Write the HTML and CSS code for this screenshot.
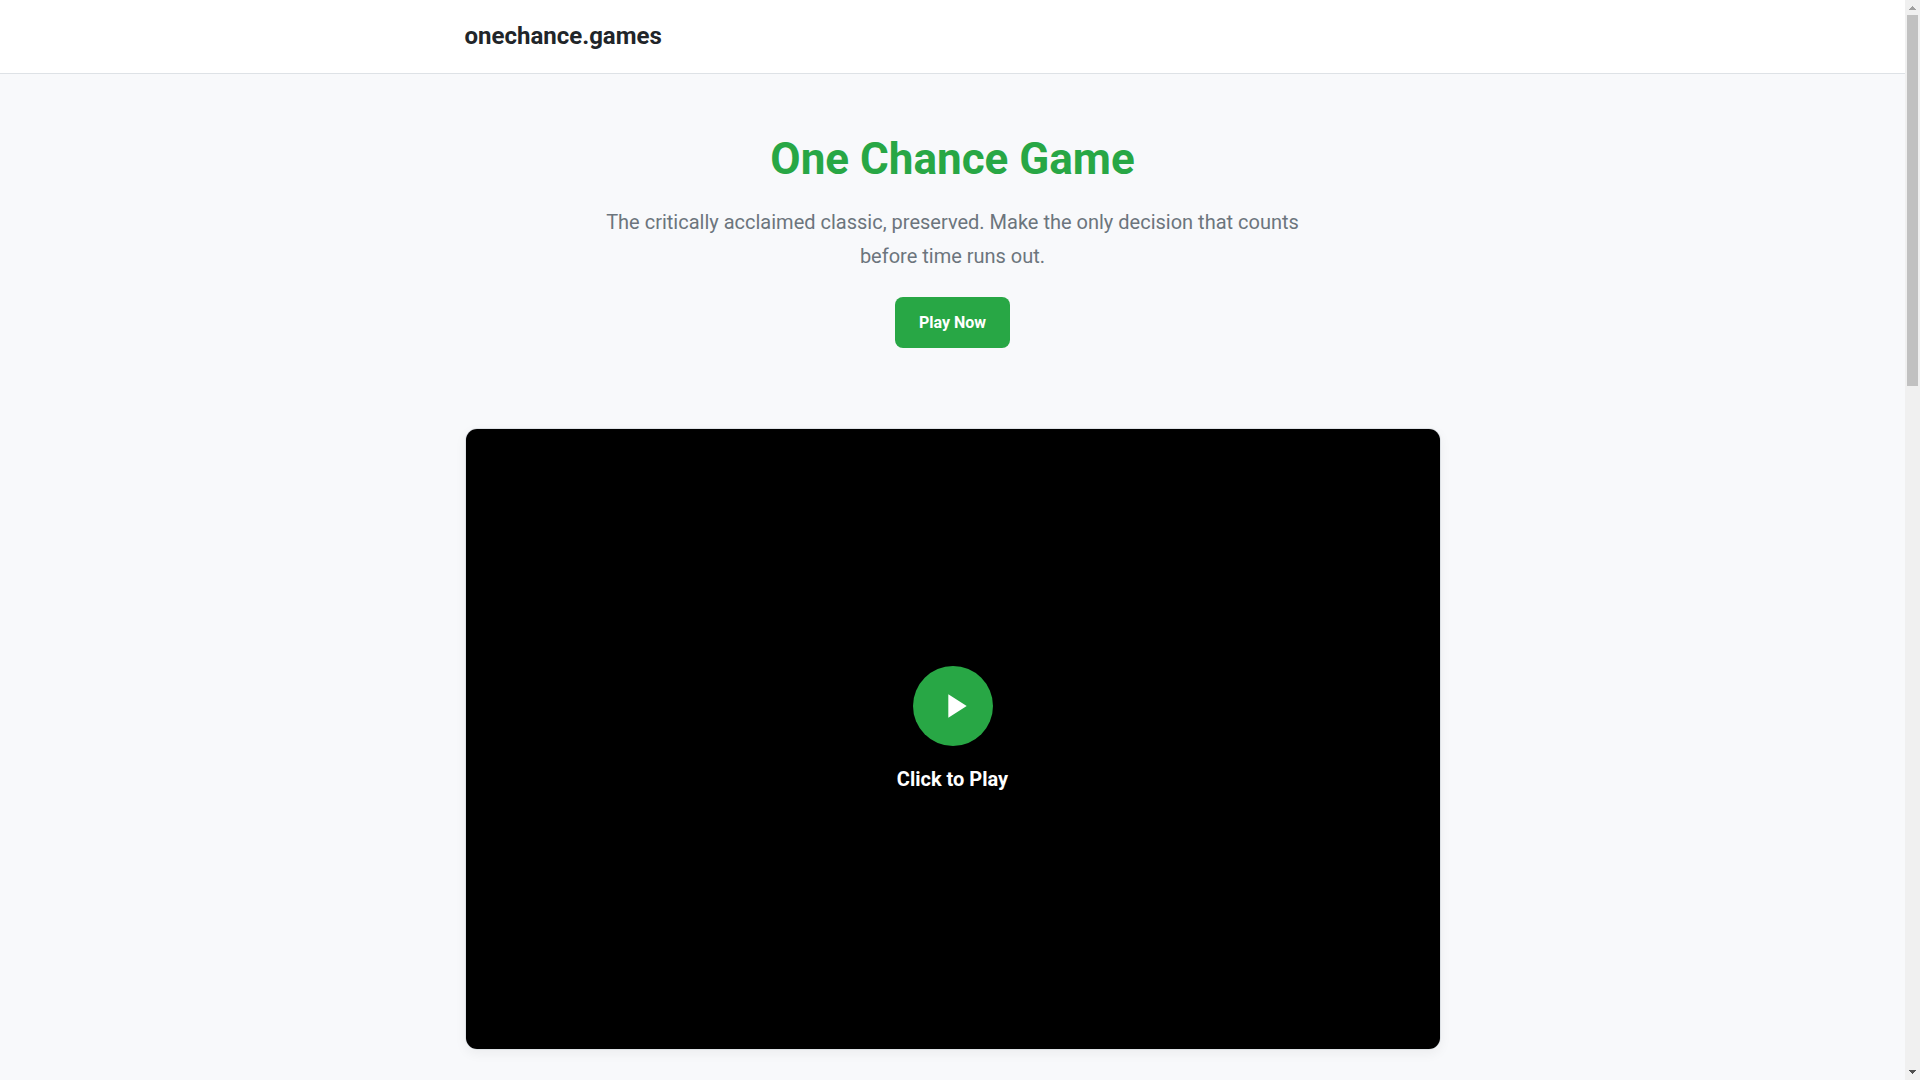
FILE: index.html
```html
<!DOCTYPE html>
<html lang="en">
<head>
    <meta charset="UTF-8">
    <meta name="viewport" content="width=device-width, initial-scale=1.0">
    <title>One Chance Game</title>
    <link rel="stylesheet" href="styles.css">
</head>
<body>
    <div class="page">
        <header class="site-header">
            <div class="container">
                <a class="logo" href="#">onechance.games</a>
            </div>
        </header>

        <main class="container">
            <section class="hero">
                <h1>One Chance Game</h1>
                <p class="subtitle">The critically acclaimed classic, preserved. Make the only decision that counts before time runs out.</p>
                <a class="cta-button" href="#game">Play Now</a>
            </section>

            <section class="game-wrapper" id="game">
                <button class="game-overlay" type="button">
                    <span class="play-icon">
                        <svg width="40" height="40" viewBox="0 0 24 24" fill="#fff" aria-hidden="true">
                            <path d="M8 5v14l11-7z"/>
                        </svg>
                    </span>
                    <span class="play-text">Click to Play</span>
                </button>
            </section>
        </main>
    </div>

    <!-- Scroll rail -->
    <div class="scroll-rail" aria-hidden="true">
        <svg class="arrow-up" width="7" height="4" viewBox="0 0 7 4" shape-rendering="crispEdges">
            <path d="M3 0h1v1h1v1h1v1h1v1H0V3h1V2h1V1h1z"/>
        </svg>
        <div class="scroll-track">
            <div class="scroll-thumb"></div>
        </div>
        <svg class="arrow-down" width="7" height="4" viewBox="0 0 7 4" shape-rendering="crispEdges">
            <path d="M0 0h7v1H6v1H5v1H4v1H3V3H2V2H1V1H0z"/>
        </svg>
    </div>
</body>
</html>
```

FILE: styles.css
```css
:root {
    --primary: #28a745;
    --bg: #f8f9fb;
    --text: #212529;
    --muted: #6c757d;
    --border: #dee2e6;
}

* {
    box-sizing: border-box;
    margin: 0;
    padding: 0;
}

body {
    display: grid;
    grid-template-columns: 1fr 15px;
    min-height: 100vh;
    font-family: Roboto, sans-serif;
    line-height: 1.7;
    color: var(--text);
    background-color: var(--bg);
}

.container {
    max-width: 1024px;
    margin: 0 auto;
    padding: 0 24px;
}

/* Header */
.site-header {
    padding: 16px 0;
    background-color: #fff;
    border-bottom: 1px solid var(--border);
}

.logo {
    display: block;
    font-size: 24px;
    font-weight: 700;
    color: var(--text);
    text-decoration: none;
}

/* Hero */
.hero {
    padding: 48px 0 80px;
    text-align: center;
}

.hero h1 {
    margin-bottom: 8px;
    font-size: 44px;
    font-weight: 700;
    color: var(--primary);
}

.subtitle {
    max-width: 700px;
    margin: 0 auto 24px;
    font-size: 20px;
    color: var(--muted);
}

.cta-button {
    display: inline-block;
    padding: 12px 24px;
    font-weight: 700;
    color: #fff;
    text-decoration: none;
    background-color: var(--primary);
    border-radius: 8px;
}

/* Game */
.game-wrapper {
    overflow: hidden;
    border: 1px solid var(--border);
    border-radius: 12px;
    box-shadow: 0 4px 12px rgba(0, 0, 0, 0.05);
}

.game-overlay {
    display: flex;
    flex-direction: column;
    align-items: center;
    justify-content: center;
    width: 100%;
    aspect-ratio: 11 / 7;
    font: inherit;
    color: #fff;
    background-color: #000;
    border: none;
    cursor: pointer;
}

.play-icon {
    display: flex;
    align-items: center;
    justify-content: center;
    width: 80px;
    height: 80px;
    padding-left: 4px;
    margin-bottom: 16px;
    background-color: var(--primary);
    border-radius: 50%;
}

.play-text {
    margin-bottom: 16px;
    font-size: 20px;
    font-weight: 700;
}

/* Scroll rail */
.scroll-rail {
    display: flex;
    flex-direction: column;
    align-items: center;
    gap: 5px;
    padding: 6px 0;
    background-color: #f0f0f0;
}

.arrow-up {
    fill: #a0a0a0;
}

.arrow-down {
    fill: #505050;
}

.scroll-track {
    flex: 1;
    width: 11px;
}

.scroll-thumb {
    height: 371px;
    background-color: #c1c1c1;
}
```
